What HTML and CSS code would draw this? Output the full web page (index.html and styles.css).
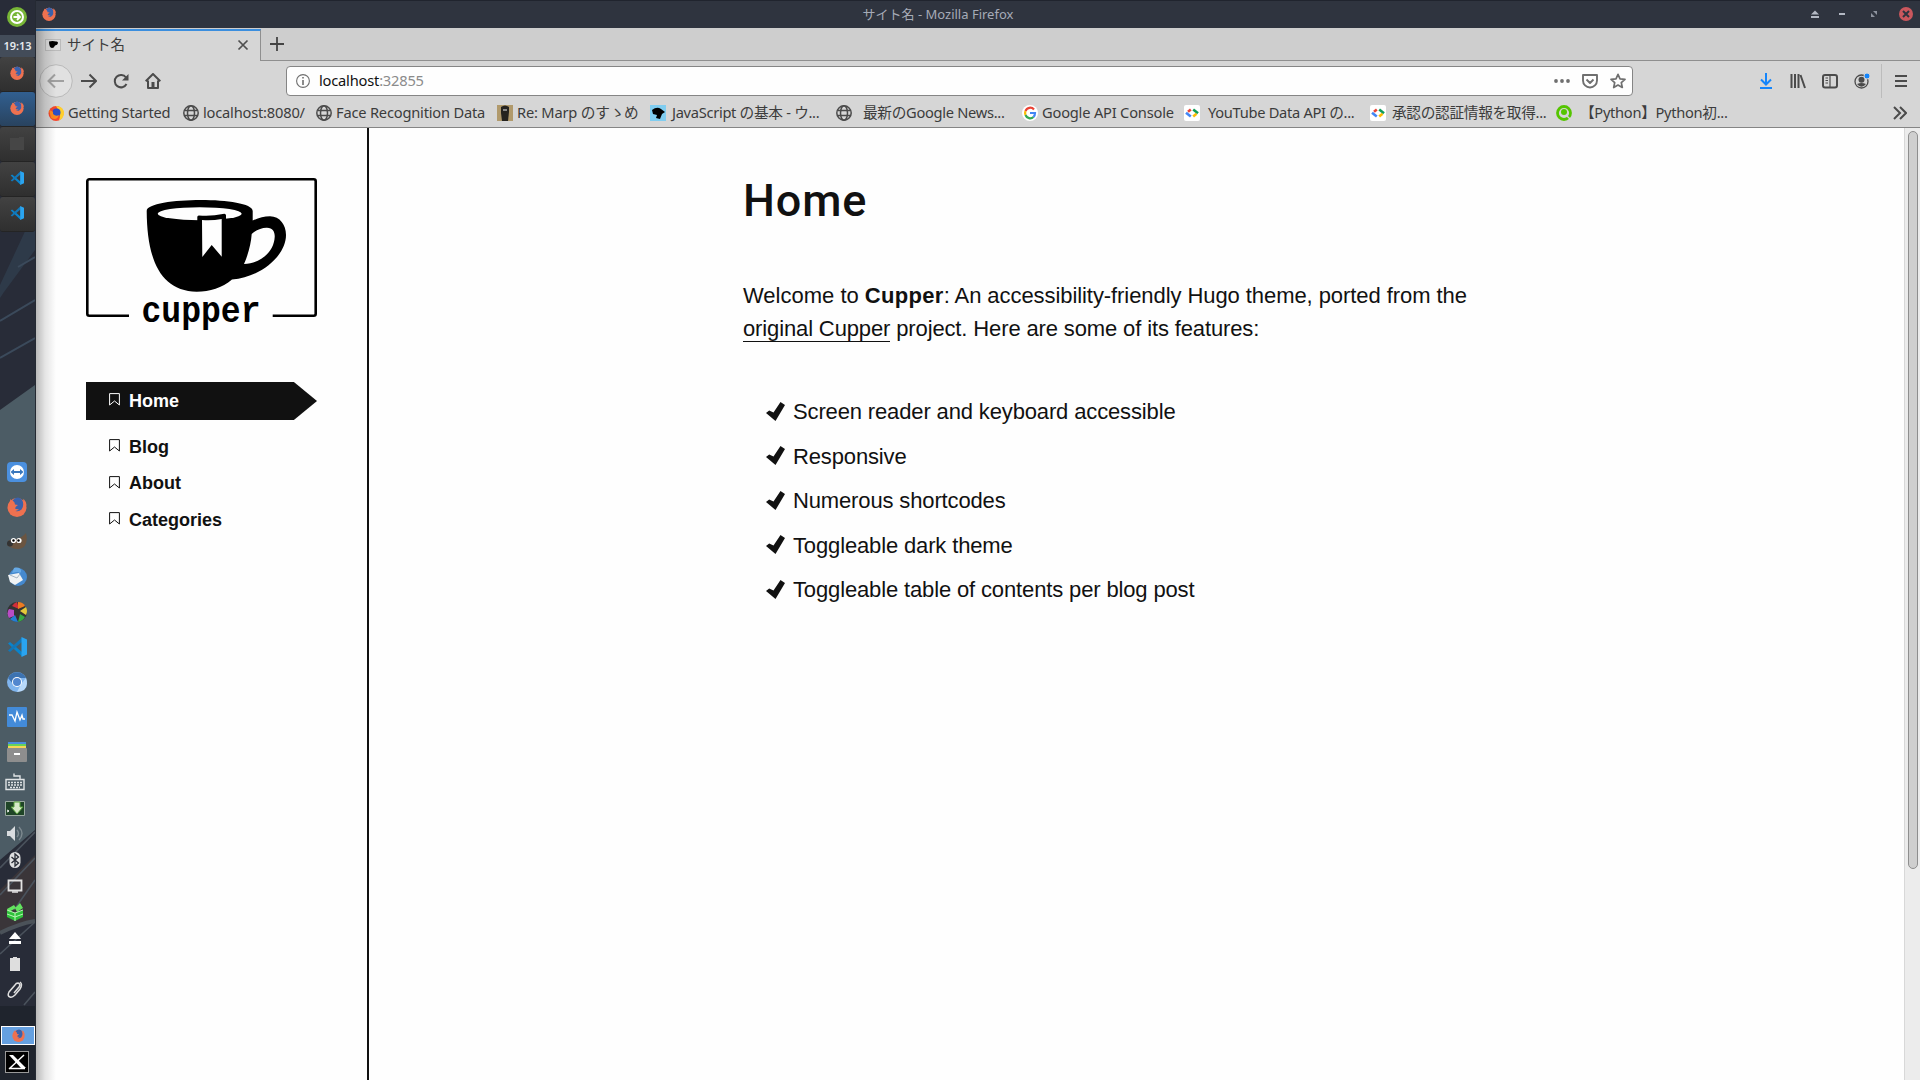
FILE: index.html
```html
<!DOCTYPE html>
<html lang="ja">
<head>
<meta charset="utf-8">
<title>サイト名</title>
<link rel="stylesheet" href="styles.css">
</head>
<body>
<svg class="defs" width="0" height="0">
  <defs>
    <symbol id="fox" viewBox="0 0 20 20">
      <circle cx="10" cy="10.500" r="9.500" fill="#ee7150"/>
      <path d="M5.500 3.500Q8 .5 11 .6q3.500.4 5 4.400.8 5-1.500 7.500-2.500 2.500-6 1.500 2.500-.5 3.500-2-2 .5-4-.5.2-2 3-3.500L8 7.500Q8 5 5.500 3.500Z" fill="#3b62ab"/>
      <path d="M3.500 2 5 4.500 2 8ZM16.500 1.800q3 3 3.200 7l-3.700-3Z" fill="#ee7150"/>
    </symbol>
    <symbol id="code" viewBox="0 0 20 20">
      <path d="M1 6.500 3 5 15 15v4.500Z" fill="#0a84cc"/>
      <path d="M1 13.500 3 15 15 5V.5Z" fill="#1277b8"/>
      <path d="M14.500 0 20 2.500v15L14.500 20Z" fill="#2aa4f0"/>
    </symbol>
    <symbol id="globe" viewBox="0 0 16 16">
      <g fill="none" stroke="#4b4b4b" stroke-width="1.500"><circle cx="8" cy="8" r="7.200"/><ellipse cx="8" cy="8" rx="3.500" ry="7.200"/><path d="M1.500 5.500h13M1.500 10.500h13"/></g>
    </symbol>
    <symbol id="gdev" viewBox="0 0 16 16">
      <rect width="16" height="16" rx="2" fill="#fff"/>
      <g fill="none" stroke-width="2.600"><path d="M6.800 4.500 4 6.800" stroke="#ea4335"/><path d="M6.800 11.500 2 7.800" stroke="#4285f4"/><path d="M9.200 4.500 14 8.200" stroke="#0f9d58"/><path d="M12.500 8.800 9.200 11.500" stroke="#fbbc05"/></g>
    </symbol>
    <symbol id="mark" viewBox="0 0 11 13"><path d="M.6.6h9.800v11.400L5.500 8 .6 12Z" fill="none" stroke="currentColor" stroke-width="1"/></symbol>
    <symbol id="check" viewBox="0 0 19 19"><path d="M0 11 3.200 8.500 7.500 10.500 14.500 0 19 3 9.500 19Z" fill="#111"/></symbol>
  </defs>
</svg>
<div class="desktop">
  <aside class="dock">
    <svg class="wallpaper" width="35" height="1080" viewBox="0 0 35 1080">
      <path d="M0 0h35v1080H0Z" fill="#282c38"/>
      <path d="M35 225v25L4 292l-4 6V285L28 225Z" fill="#2e3a49"/>
      <path d="M35 257 18 267M35 300 0 321M35 338 0 358" stroke="#3b4a5b" stroke-width="2" fill="none"/>
      <path d="M35 385v445L0 860V410Z" fill="#4c5c65"/>
      <path d="M35 855v65L0 932V890Z" fill="#3a3539"/>
      <path d="M35 832 0 868M35 858 0 895M14 910 35 880M0 954 35 922M24 1005 35 992" stroke="#4a525c" stroke-width="1.600" fill="none"/>
      <path d="M0 933Q18 924 35 921" stroke="#4b5259" stroke-width="4" fill="none"/>
      <path d="M0 1006h35v74H0Z" fill="#1f242d"/>
    </svg>
    <div class="menu"><svg width="20" height="20" viewBox="0 0 20 20"><circle cx="10" cy="10" r="10" fill="#78b637"/><circle cx="10" cy="10" r="6" fill="none" stroke="#fff" stroke-width="2"/><path d="M6.500 10h6M10 7l3 3-3 3" fill="none" stroke="#fff" stroke-width="1.800"/></svg></div>
    <div class="clock">19:13</div>
    <div class="task"><svg width="14" height="14"><use href="#fox"/></svg></div>
    <div class="task active"><svg width="14" height="14"><use href="#fox"/></svg></div>
    <div class="task"><svg width="14" height="14" viewBox="0 0 14 14"><path d="M0 2h9v-1h5v13H0Z" fill="#464646"/></svg></div>
    <div class="task"><svg width="14" height="14"><use href="#code"/></svg></div>
    <div class="task"><svg width="14" height="14"><use href="#code"/></svg></div>
    <div class="launchers">
      <svg viewBox="0 0 20 20"><rect width="20" height="20" rx="4" fill="#4b90df"/><circle cx="10" cy="10" r="7" fill="#fff"/><path d="M3.500 10 7 7v2h6V7l3.500 3-3.500 3v-2H7v2Z" fill="#3977bd"/></svg>
      <svg><use href="#fox"/></svg>
      <svg viewBox="0 0 20 20"><path d="M2 8C8 8 15 6 19 1c2 8 0 16-8 16C6 17 3 15 0 13Z" fill="#6b5541"/><circle cx="3" cy="11.500" r="3" fill="#333"/><circle cx="6.500" cy="8.500" r="2.600" fill="#fff"/><circle cx="12" cy="8.500" r="2.600" fill="#fff"/><circle cx="6.500" cy="8.500" r="1.200"/><circle cx="11.500" cy="8.500" r="1.200"/></svg>
      <svg viewBox="0 0 20 20"><circle cx="11" cy="10" r="9" fill="#4589ce"/><path d="M1 8 12 6l4 7-8 5-5-3Z" fill="#f1f3f4"/><path d="M3 8l7 3 3-4" fill="none" stroke="#a8b6c2"/><path d="M7 1c6-2 9 3 6 5-3-2-6 0-8 0Z" fill="#67aae6"/></svg>
      <svg viewBox="0 0 20 20"><circle cx="10" cy="10" r="10" fill="#333"/><path d="M10 0 12 7 5 4Q7 1 10 0Z" fill="#d32f3a"/><path d="M11 0q5 0 7 4l-7 3Z" fill="#ee7b22"/><path d="m13 9 6-4q2 4 0 8Z" fill="#e5c93a"/><path d="m13 12 5 3q-2 4-7 5Z" fill="#37a845"/><path d="m8 13 3 7q-5 0-8-3Z" fill="#257fd4"/><path d="M7 8v6l-5 2q-3-5 0-9Z" fill="#b84dc5"/></svg>
      <svg><use href="#code"/></svg>
      <svg viewBox="0 0 20 20"><circle cx="10" cy="10" r="10" fill="#80b5ee"/><path d="M1 6A10 10 0 0 1 19 6H10L6 12Z" fill="#3d73b1"/><path d="M19 6q4 13-9 14l4-8Z" fill="#b8d9fa"/><circle cx="10" cy="10" r="5" fill="#fff"/><circle cx="10" cy="10" r="4" fill="#5287cf"/></svg>
      <svg viewBox="0 0 20 20"><rect width="20" height="20" rx="1" fill="#438bd9"/><path d="M2 8h3l3 6L10 5l3 8 2-5 1 4h2" fill="none" stroke="#fff" stroke-width="1.300"/></svg>
      <svg viewBox="0 0 20 20"><path d="M1 0h18v2H1Z" fill="#4a8de0"/><path d="M1 2h18v2H1Z" fill="#67d259"/><path d="M1 4h18v3H1Z" fill="#f6d655"/><rect y="6" width="20" height="14" rx="1" fill="#8e8e8e"/><path d="M7 11h6v2H7Z" fill="#fff"/></svg>
    </div>
    <div class="tray">
      <svg viewBox="0 0 20 20"><path d="M1 7.500h18v10H1ZM15 7V4H9V1.500" fill="none" stroke="#dfe3e5" stroke-width="1.400"/><path d="M3 10.500h14M3 13h14M5 15.500h10" stroke="#dfe3e5" stroke-width="1.400" stroke-dasharray="2 1"/></svg>
      <svg viewBox="0 0 20 20"><path d="M.5 3.500h19v14H.5Z" fill="#1f4527" stroke="#9aa9a0"/><path d="M9 4h6v5h3l-6 7-6-7h3Z" fill="#d7eac9" stroke="#57a03a"/><path d="m2 12 2 1-2 1" stroke="#fff" fill="none"/></svg>
      <svg viewBox="0 0 20 20"><path d="M2 7h3l5-5v15l-5-5H2Z" fill="#d9dcdf"/><path d="M12 6q3 3.500 0 7M14 3q6 6.500 0 13" fill="none" stroke="#7d898f" stroke-width="1.400"/></svg>
      <svg viewBox="0 0 20 20"><rect x="4.500" y="2" width="11" height="16" rx="5.500" fill="#dedfe0"/><path d="m6.500 7 7 6L10 16V4l3.500 3-7 6" fill="none" stroke="#262a33" stroke-width="1.300"/></svg>
      <svg viewBox="0 0 20 20"><path d="M3.500 4.500h13v10h-13Z" fill="none" stroke="#e3e3e3" stroke-width="1.800"/><path d="M7 16h6" stroke="#e3e3e3" stroke-width="1.500"/></svg>
      <svg viewBox="0 0 20 20"><path d="m2 8 8 3 8-3v7l-8 4-8-4Z" fill="#2fc13b"/><path d="m2 7 7-4 2 3-7 4Zm8-1 5-5 3 5-6 4Z" fill="#63e45f"/><path d="M10 11v8M2 8l8 3 8-3M2 12l8 3 8-3" fill="none" stroke="#bdf5b8"/></svg>
      <svg viewBox="0 0 20 20"><path d="m4 11 6-7 6 7ZM4 13h12v3H4Z" fill="#fff"/></svg>
      <svg viewBox="0 0 20 20"><path d="M5 4h3V3h4v1h3v13H5Z" fill="#dedede"/></svg>
      <svg viewBox="0 0 20 20"><path d="m9 13 5-6q2-3-1-4-2 0-3 2L4 12q-2 4 1 5 2 1 5-2l5-6q3-5 0-7" fill="none" stroke="#dedede" stroke-width="1.500"/></svg>
    </div>
    <div class="pager">
      <div class="desk"><svg width="13" height="13"><use href="#fox"/></svg></div>
      <svg class="xicon" width="24" height="22" viewBox="0 0 24 22"><rect x=".5" y=".5" width="23" height="21" fill="#000" stroke="#999"/><path d="M4 4h4l13 13h-5Z" fill="#fff"/><path d="M19 4 4 18M4 17.500h16" stroke="#fff" stroke-width="1.500"/></svg>
    </div>
  </aside>

  <div class="window">
    <header class="titlebar">
      <svg class="app" width="14" height="14"><use href="#fox"/></svg>
      <span class="wtitle">サイト名 - Mozilla Firefox</span>
      <svg class="wbtns" width="114" height="28" viewBox="0 0 114 28">
        <path d="m5 14.500 4-4 4 4ZM5 16h8v2H5ZM33 13h6v2h-6Z" fill="#b3b8c3"/>
        <path d="M67 11h4v4ZM65 13v4h4Z" fill="#8e939f"/>
        <circle cx="100" cy="14" r="7" fill="#cb575d"/><path d="m97 11 6 6M103 11l-6 6" stroke="#2f343f" stroke-width="2"/>
      </svg>
    </header>
    <div class="tabs">
      <div class="tab">
        <svg width="16" height="12" viewBox="0 0 16 12"><rect x=".5" y=".5" width="15" height="11" fill="#ddd" stroke="#bbb"/><path d="M4 2.500q3.500-1 7 0 2-.5 2 1.500-.3 2-3 2.500-1 2.500-3 2.500Q4 8.500 4 2.500Z"/></svg>
        <span class="tabname">サイト名</span>
        <svg width="12" height="12" viewBox="0 0 12 12"><path d="m1.500 1.500 9 9M10.500 1.500l-9 9" stroke="#4f4f4f" stroke-width="1.700"/></svg>
      </div>
      <div class="newtab"><svg width="14" height="14" viewBox="0 0 14 14"><path d="M7 0v14M0 7h14" stroke="#444" stroke-width="1.800"/></svg></div>
    </div>
    <div class="toolbar">
      <div class="navs">
        <svg width="34" height="34" viewBox="0 0 34 34"><circle cx="17" cy="17" r="16.300" fill="#e1e1e1" stroke="#b9b9b9"/><path d="M25 17H10M16 10.500 9.500 17l6.500 6.500" fill="none" stroke="#a0a0a0" stroke-width="2"/></svg>
        <svg width="16" height="16" viewBox="0 0 16 16"><path d="M0 8h14M8.500 1.500 15 8l-6.500 6.500" fill="none" stroke="#4b4b4b" stroke-width="2"/></svg>
        <svg width="16" height="16" viewBox="0 0 16 16"><path d="M13.500 11A6.200 6.200 0 1 1 13 4.500" fill="none" stroke="#4b4b4b" stroke-width="2"/><path d="M15.500 1v6.500H9Z" fill="#4b4b4b"/></svg>
        <svg width="16" height="16" viewBox="0 0 16 16"><path d="M.7 8.300 8 1l7.300 7.300M3 7.500V15h10V7.500" fill="none" stroke="#4b4b4b" stroke-width="2" stroke-linejoin="round"/><path d="M6.500 9h3v6h-3Z" fill="#4b4b4b"/></svg>
      </div>
      <div class="urlbar">
        <svg width="14" height="14" viewBox="0 0 14 14"><circle cx="7" cy="7" r="6.400" fill="none" stroke="#6f6f6f" stroke-width="1.100"/><path d="M6.200 3h1.600v1.600H6.200ZM6.200 6h1.600v5H6.200Z" fill="#6f6f6f"/></svg>
        <span class="url">localhost<i>:32855</i></span>
        <svg width="16" height="4" viewBox="0 0 16 4"><g fill="#6f6f6f"><circle cx="2" cy="2" r="1.900"/><circle cx="8" cy="2" r="1.900"/><circle cx="14" cy="2" r="1.900"/></g></svg>
        <svg width="16" height="15" viewBox="0 0 16 15"><path d="M1 1h14v5.500a7 7 0 0 1-14 0ZM4.500 5.500 8 9l3.500-3.500" fill="none" stroke="#6f6f6f" stroke-width="1.900" stroke-linejoin="round"/></svg>
        <svg width="16" height="16" viewBox="0 0 16 16"><path d="m8 1.300 2 4.500 5 .5-3.700 3.300 1 4.900L8 12l-4.300 2.500 1-4.900L1 6.300l5-.5Z" fill="none" stroke="#6f6f6f" stroke-width="1.700" stroke-linejoin="round"/></svg>
      </div>
      <div class="tools">
        <svg viewBox="0 0 16 16"><path d="M8 0v11M3 6.500l5 5 5-5M2 15h12" fill="none" stroke="#1485fb" stroke-width="2"/></svg>
        <svg viewBox="0 0 16 16"><path d="M1.500 1v14M5 1v14M8.500 1v14M10.500 2l4.500 13" fill="none" stroke="#4b4b4b" stroke-width="2"/></svg>
        <svg viewBox="0 0 16 16"><rect x="1" y="2" width="14" height="12.500" rx="2" fill="none" stroke="#4b4b4b" stroke-width="2"/><path d="M8 2v12M3.500 5H6M3.500 7.500H6M3.500 10H6" stroke="#4b4b4b" stroke-width="1.200"/></svg>
        <svg viewBox="0 0 16 16"><circle cx="7.500" cy="8.500" r="6.500" fill="none" stroke="#4b4b4b" stroke-width="1.300"/><circle cx="7.500" cy="6.800" r="3" fill="#4b4b4b"/><path d="M3 11q4.500-2 9 0-4.500 5.500-9 0Z" fill="#4b4b4b"/><circle cx="13" cy="3" r="3" fill="#1485fb" stroke="#d6d6d6"/></svg>
      </div>
      <div class="burger"><svg width="12" height="14" viewBox="0 0 12 14"><path d="M0 2h12M0 7h12M0 12h12" stroke="#4b4b4b" stroke-width="2"/></svg></div>
    </div>
    <nav class="bookmarks">
      <div class="bm"><svg viewBox="0 0 16 16"><circle cx="8" cy="8.500" r="7.500" fill="#f6472d"/><path d="M8 1q8 0 8 8-1 5-5 6.500 3-6-3-14.500Z" fill="#ffcf2c"/><circle cx="8.500" cy="7.500" r="4" fill="#2b4fc5"/><path d="M1 5q5 1 4 4 3 3 6 1-2 6-8 3Z" fill="#ff8a1d"/></svg><span>Getting Started</span></div>
      <div class="bm"><svg><use href="#globe"/></svg><span>localhost:8080/</span></div>
      <div class="bm"><svg><use href="#globe"/></svg><span>Face Recognition Data</span></div>
      <div class="bm"><svg viewBox="0 0 16 16"><path d="M0 0h16v16H0Z" fill="#b19a6c"/><path d="M4 2q4-3 8 0v5l-1 9H5L4 8Z" fill="#25231f"/><path d="M6 4h4v2H6Z" fill="#888"/></svg><span>Re: Marp のすゝめ</span></div>
      <div class="bm w6"><svg viewBox="0 0 16 16"><path d="M0 0h16v16H0Z" fill="#80cdf0"/><path d="M2 5q5-4 9-1l4 3-3 2-2 5-4-1 1-3-4-1Z"/></svg><span>JavaScript の基本 - ウ...</span></div>
      <div class="bm w11"><svg><use href="#globe"/></svg><span>最新のGoogle News...</span></div>
      <div class="bm"><svg viewBox="0 0 16 16"><circle cx="8" cy="8" r="8" fill="#fff"/><g fill="none" stroke-width="2.200"><path d="M12 4.500A5 5 0 0 0 3.500 6" stroke="#ea4335"/><path d="M3.500 6a5 5 0 0 0 0 4" stroke="#fbbc05"/><path d="M3.500 10A5 5 0 0 0 11.500 12" stroke="#34a853"/><path d="M11.500 12Q13 10.500 13 8H8" stroke="#4285f4"/></g></svg><span>Google API Console</span></div>
      <div class="bm w8"><svg><use href="#gdev"/></svg><span>YouTube Data API の...</span></div>
      <div class="bm w6"><svg><use href="#gdev"/></svg><span>承認の認証情報を取得...</span></div>
      <div class="bm w8"><svg viewBox="0 0 16 16"><circle cx="8" cy="8" r="6.500" fill="none" stroke="#55c500" stroke-width="2.800"/><circle cx="8" cy="7" r="3" fill="#55c500"/><path d="m11 11 4 4" stroke="#d6d6d6" stroke-width="1.500"/></svg><span>【Python】Python初...</span></div>
      <svg class="more" width="14" height="14" viewBox="0 0 14 14"><path d="m1 1 6 6-6 6M7 1l6 6-6 6" fill="none" stroke="#4b4b4b" stroke-width="2"/></svg>
    </nav>
    <div class="page">
      <div class="side">
        <svg class="logo" width="232" height="160" viewBox="0 0 232 160">
          <path d="M43 137.700H3.300a2 2 0 0 1-2-2V3.300a2 2 0 0 1 2-2H227.700a2 2 0 0 1 2 2V135.700a2 2 0 0 1-2 2H186.700" fill="none" stroke="#000" stroke-width="2.600"/>
          <path d="M60.700 33C61 19 166 18 166.700 33V42.500C172 40 178 38.300 184 38.300 194 38.500 200 47 200 57 200 77 176 99 146 101.500 136 110 124 113.700 110.700 113.700 75 113 61 83 60.700 33Z"/>
          <path d="M165.700 56C170 52 176 49.500 181 49.700 187 50 189 54 188.700 59 188 73 176 85 158 86 162 77 165 66 165.700 56Z" fill="#fefefe"/>
          <ellipse cx="113.700" cy="35.700" rx="42" ry="6.500" fill="#fefefe"/>
          <path d="M111.300 39q0-1.500 1.500-1.500 13 1 24-1.500 3-1 3.200 1.200V62h-28.700Z"/>
          <path d="M116 42q10 .8 19.700-1v37.700L125.700 67 116.300 79Z" fill="#fefefe"/>
          <text x="55.500" y="144.300" textLength="119" lengthAdjust="spacingAndGlyphs" class="logotext">cupper</text>
        </svg>
        <div class="menu-item current"><svg width="11" height="13"><use href="#mark"/></svg>Home</div>
        <div class="menu-item"><svg width="11" height="13"><use href="#mark"/></svg>Blog</div>
        <div class="menu-item"><svg width="11" height="13"><use href="#mark"/></svg>About</div>
        <div class="menu-item"><svg width="11" height="13"><use href="#mark"/></svg>Categories</div>
      </div>
      <main class="content">
        <h1>Home</h1>
        <p><span>Welcome to <b>Cupper</b><span class="l1">: An accessibility-friendly Hugo theme, ported from the</span></span><br><span class="l2"><a>original Cupper</a> project. Here are some of its features:</span></p>
        <ul>
          <li><svg width="19" height="19"><use href="#check"/></svg>Screen reader and keyboard accessible</li>
          <li><svg width="19" height="19"><use href="#check"/></svg>Responsive</li>
          <li><svg width="19" height="19"><use href="#check"/></svg>Numerous shortcodes</li>
          <li><svg width="19" height="19"><use href="#check"/></svg>Toggleable dark theme</li>
          <li><svg width="19" height="19"><use href="#check"/></svg>Toggleable table of contents per blog post</li>
        </ul>
      </main>
      <div class="scroll"><div class="thumb"></div></div>
    </div>
  </div>
</div>
</body>
</html>
```
FILE: styles.css
```css
* { box-sizing: border-box; }
body { margin: 0; overflow: hidden; font-family: "Noto Sans", "Noto Sans CJK JP", sans-serif; }
svg { display: block; flex: none; }
.defs { position: absolute; }
.desktop { display: flex; width: 1920px; height: 1080px; }

.dock {
  width: 36px; flex: none; border-right: 1px solid #252a33;
  display: flex; flex-direction: column; align-items: stretch;
  position: relative; isolation: isolate;
}
.wallpaper { position: absolute; inset: 0; z-index: -1; }
.menu { height: 35px; display: flex; align-items: center; padding: 0 0 2px 7px; }
.clock { height: 22px; background: #434c59; color: #e6e9ee; font-size: 11px; font-weight: 600; line-height: 22px; text-align: center; }
.task { height: 35px; padding: 9px 0 0 10px; background: linear-gradient(#424242, #2f2f2f); border-bottom: 1px solid #242424; border-radius: 3px; }
.task.active { background: linear-gradient(#315f90, #29435f); }
.launchers { margin-top: 230px; display: flex; flex-direction: column; gap: 15px; padding-left: 7px; }
.launchers svg { width: 20px; height: 20px; }
.tray { margin-top: 10px; display: flex; flex-direction: column; gap: 6px; padding-left: 5px; }
.tray svg { width: 20px; height: 20px; }
.pager { margin-top: auto; height: 54px; }
.desk { height: 19px; margin-left: 1px; background: #65a0e0; border: 1px solid #fff; display: flex; align-items: center; justify-content: center; }
.xicon { margin: 6px 0 0 5px; }

.window { flex: 1; display: flex; flex-direction: column; position: relative; background: #fefefe; min-width: 0; }
.window::after {
  content: ""; position: absolute; left: 0; top: 28px; bottom: 0; width: 20px;
  background: linear-gradient(90deg, rgba(0,0,0,.27), rgba(0,0,0,.1) 45%, transparent);
}
.titlebar { height: 28px; background: #2f343f; border-top: 1px solid #20242e; display: flex; align-items: center; padding: 0 0 2px 6px; }
.wtitle { flex: 1; text-align: center; color: #a6abb7; font-size: 13px; padding-left: 14px; }
.tabs { height: 33px; background: #cecece; display: flex; }
.tab { width: 225px; border-top: 2px solid #3b8ede; margin-top: 1px; border-right: 1px solid #8f8f8f; background: #d6d6d6; display: flex; align-items: center; padding: 0 11px 3px 9px; }
.tabname { flex: 1; margin: -2px 0 0 6px; font-size: 14.500px; color: #3c3c3c; }
.newtab { flex: 1; border-bottom: 1px solid #8f8f8f; padding: 9px 0 0 9px; }
.toolbar { height: 40px; background: #d6d6d6; display: flex; align-items: center; }
.navs { width: 250px; padding-left: 3px; display: flex; align-items: center; gap: 16px; }
.navs svg:first-child { margin-right: -8px; }
.urlbar { width: 1347px; height: 30px; background: #fefefe; border: 1px solid #858585; border-radius: 4px; display: flex; align-items: center; padding: 0 6px 0 9px; gap: 12px; }
.url { flex: 1; font-size: 14.670px; letter-spacing: -.2px; margin: -2px 0 0 -3px; color: #111; }
.url i { font-style: normal; color: #8b8b8b; }
.tools { display: flex; gap: 16px; margin-left: 125px; }
.tools svg { width: 16px; height: 16px; }
.burger { margin-left: 11px; height: 34px; border-left: 1px solid #bcbcbc; padding: 10px 0 0 13px; }
.bookmarks {
  height: 27px; background: #d6d6d6; border-bottom: 1px solid #858585; padding-left: 12px;
  display: grid; grid-template-columns: 135px 133px 181px 153px 186px 186px 162px 186px 186px 337px auto; align-items: center; padding-bottom: 3px;
}
.bm { display: flex; align-items: center; gap: 4px; white-space: nowrap; font-size: 14.670px; letter-spacing: -.2px; line-height: 20px; color: #3c3c3c; }
.bm span { margin-top: -1px; }
.bm svg { width: 16px; height: 16px; }
.bm.w6 { gap: 6px; letter-spacing: -.3px; }
.bm.w8 { gap: 8px; letter-spacing: -.3px; }
.bm.w11 { gap: 11px; letter-spacing: -.3px; }

.page { flex: 1; display: flex; color: #111; font-family: "Liberation Sans", Arial, sans-serif; }
.side { width: 333px; border-right: 2px solid #111; padding: 50px 0 0 50px; }
.logotext { font: bold 36px "Liberation Mono", monospace; }
.menu-item { display: flex; align-items: center; gap: 9px; height: 36.500px; padding-left: 23px; font-size: 18px; font-weight: bold; }
.menu-item svg { margin-top: -3px; }
.current { width: 231px; height: 38px; margin: 44px 0 9px; background: #111; color: #fefefe; clip-path: polygon(0 0, 90% 0, 100% 50%, 90% 100%, 0 100%); }
.content { flex: 1; padding: 45px 0 0 374px; }
h1 { margin: 0; font: 500 45px/56px Roboto, sans-serif; letter-spacing: .9px; }
p { margin: 50px 0 0; font-size: 22px; line-height: 33px; }
b { letter-spacing: .3px; }
.l1 { letter-spacing: -.07px; }
.l2 { letter-spacing: -.13px; }
a { border-bottom: 1px solid #111; }
ul { list-style: none; margin: 45px 0 0; padding: 0 0 0 23px; }
li { display: flex; align-items: center; gap: 8px; height: 44.500px; font-size: 22px; letter-spacing: -.14px; }
li svg { margin-top: -2px; }
.scroll { width: 16px; background: #ececec; border-left: 1px solid #d8d8d8; padding: 3px 3px 0; }
.thumb { height: 738px; width: 10px; border: 1px solid #8e8e8e; border-radius: 5px; background: #cfcfcf; }
```
